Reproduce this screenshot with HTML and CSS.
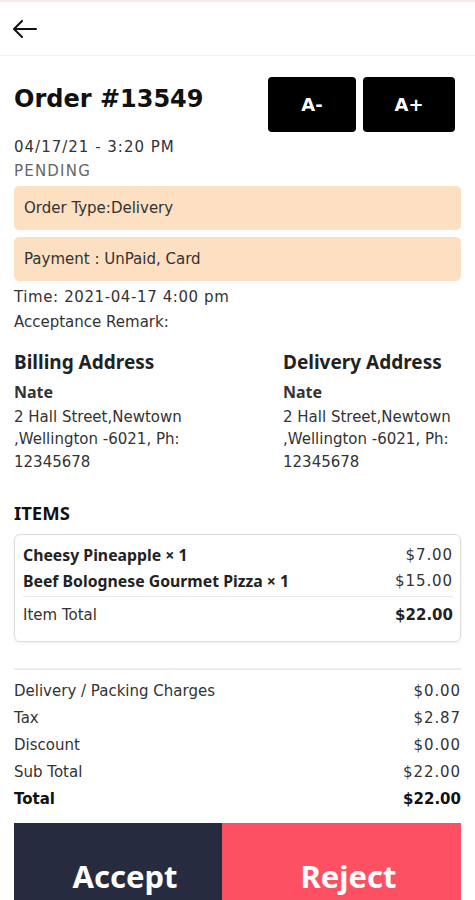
FILE: index.html
```html
<!DOCTYPE html>
<html lang="en">
<head>
    <meta charset="UTF-8">
    <meta name="viewport" content="width=device-width, initial-scale=1.0">
    <title>Order #13549</title>
    <link rel="stylesheet" href="styles.css">
</head>
<body>

    <div class="topbar">
        <a class="back" href="#">
            <svg width="24" height="18" viewBox="0 0 24 18" fill="none" stroke="#111" stroke-width="2" stroke-linecap="round" stroke-linejoin="round">
                <path d="M23 9H2"/>
                <path d="M9 1L1 9l8 8"/>
            </svg>
        </a>
    </div>

    <div class="page">
        <div class="order-head">
            <h1>Order #13549</h1>
            <div class="font-btns">
                <button class="font-btn minus">A-</button>
                <button class="font-btn plus">A+</button>
            </div>
        </div>

        <div class="date">04/17/21 - 3:20 PM</div>
        <div class="status">PENDING</div>

        <div class="tag">Order Type:Delivery</div>
        <div class="tag">Payment : UnPaid, Card</div>

        <div class="line first">Time: 2021-04-17 4:00 pm</div>
        <div class="line">Acceptance Remark:</div>

        <div class="addresses">
            <div class="address">
                <h2>Billing Address</h2>
                <div class="name">Nate</div>
                <p>2 Hall Street,Newtown ,Wellington -6021, Ph: 12345678</p>
            </div>
            <div class="address">
                <h2>Delivery Address</h2>
                <div class="name">Nate</div>
                <p>2 Hall Street,Newtown ,Wellington -6021, Ph: 12345678</p>
            </div>
        </div>

        <h3>ITEMS</h3>
        <div class="items">
            <div class="item">
                <span class="item-name">Cheesy Pineapple × 1</span>
                <span class="num">$7.00</span>
            </div>
            <div class="item">
                <span class="item-name">Beef Bolognese Gourmet Pizza × 1</span>
                <span class="num">$15.00</span>
            </div>
            <div class="item-total">
                <span>Item Total</span>
                <span class="num">$22.00</span>
            </div>
        </div>

        <div class="summary">
            <div class="row"><span>Delivery / Packing Charges</span><span class="num">$0.00</span></div>
            <div class="row"><span>Tax</span><span class="num">$2.87</span></div>
            <div class="row"><span>Discount</span><span class="num">$0.00</span></div>
            <div class="row"><span>Sub Total</span><span class="num">$22.00</span></div>
            <div class="row total"><span>Total</span><span class="num">$22.00</span></div>
        </div>

        <div class="actions">
            <button class="accept">Accept</button>
            <button class="reject">Reject</button>
        </div>
    </div>

</body>
</html>
```

FILE: styles.css
```css
body {
    font-family: "DejaVu Sans", "Noto Sans", sans-serif;
    font-size: 15px;
    margin: 0;
    background-color: white;
    color: #333;
}
.topbar {
    height: 53px;
    border-top: 2px solid #fbe9e7;
    border-bottom: 1px solid #f2f2f2;
    display: flex;
    align-items: center;
    padding: 0 13px;
}
.back {
    display: flex;
}
.page {
    padding: 0 14px;
}
.order-head {
    display: flex;
    justify-content: space-between;
    align-items: flex-start;
    padding-top: 21px;
}
h1 {
    font-size: 24px;
    line-height: 30px;
    margin: 7px 0 0;
    color: #111;
}
.font-btns {
    display: flex;
    gap: 7px;
    margin-right: 6px;
}
.font-btn {
    height: 55px;
    background-color: #000;
    color: white;
    border: none;
    border-radius: 4px;
    font-family: "DejaVu Sans", sans-serif;
    font-weight: bold;
    font-size: 18px;
    cursor: pointer;
}
.font-btn.minus {
    width: 88px;
}
.font-btn.plus {
    width: 92px;
}
.date {
    line-height: 24px;
    margin-top: 3px;
    letter-spacing: 1px;
}
.status {
    line-height: 24px;
    color: #666;
    letter-spacing: 1.2px;
}
.tag {
    background-color: #fde0c2;
    border-radius: 5px;
    padding: 0 10px;
    height: 44px;
    line-height: 44px;
    margin-top: 3px;
}
.tag + .tag {
    margin-top: 7px;
}
.line {
    line-height: 25px;
}
.line.first {
    margin-top: 4px;
    letter-spacing: 0.6px;
}
.addresses {
    display: grid;
    grid-template-columns: 269px 1fr;
    margin-top: 14px;
}
h2 {
    font-family: "Noto Sans", sans-serif;
    font-size: 19px;
    line-height: 26px;
    margin: 0 0 6px;
    color: #222;
}
.name {
    font-family: "Noto Sans", sans-serif;
    font-size: 16px;
    font-weight: bold;
    line-height: 23px;
}
.address p {
    width: 182px;
    line-height: 22.5px;
    margin: 1.5px 0 0;
}
h3 {
    font-family: "Noto Sans", sans-serif;
    font-size: 18.5px;
    line-height: 24px;
    margin: 28px 0 9px;
    color: #111;
}
.items {
    border: 1px solid #ddd;
    border-radius: 6px;
    box-shadow: 0 1px 3px rgba(0, 0, 0, 0.08);
    padding: 7px 7px 13px 8px;
}
.item {
    display: flex;
    justify-content: space-between;
    line-height: 26px;
}
.item-name {
    font-family: "Noto Sans", sans-serif;
    font-size: 15.8px;
    font-weight: bold;
    color: #222;
}
.num {
    letter-spacing: 0.9px;
}
.item-total {
    display: flex;
    justify-content: space-between;
    border-top: 1px solid #e8e8e8;
    margin-top: 2px;
    padding-top: 5px;
    line-height: 26px;
}
.item-total .num {
    font-weight: bold;
    color: #222;
    letter-spacing: 0;
}
.summary {
    border-top: 2px solid #ececec;
    margin-top: 26px;
    padding-top: 8px;
}
.row {
    display: flex;
    justify-content: space-between;
    line-height: 27px;
}
.row.total {
    font-weight: bold;
    color: #111;
}
.row.total .num {
    letter-spacing: 0;
}
.actions {
    display: flex;
    margin-top: 10px;
}
.actions button {
    height: 100px;
    border: none;
    color: white;
    font-family: "Noto Sans", sans-serif;
    font-size: 31px;
    font-weight: bold;
    padding: 6px 0 0 14px;
    cursor: pointer;
}
.accept {
    width: 208px;
    background-color: #272b40;
}
.reject {
    flex: 1;
    background-color: #fd5163;
}
```
